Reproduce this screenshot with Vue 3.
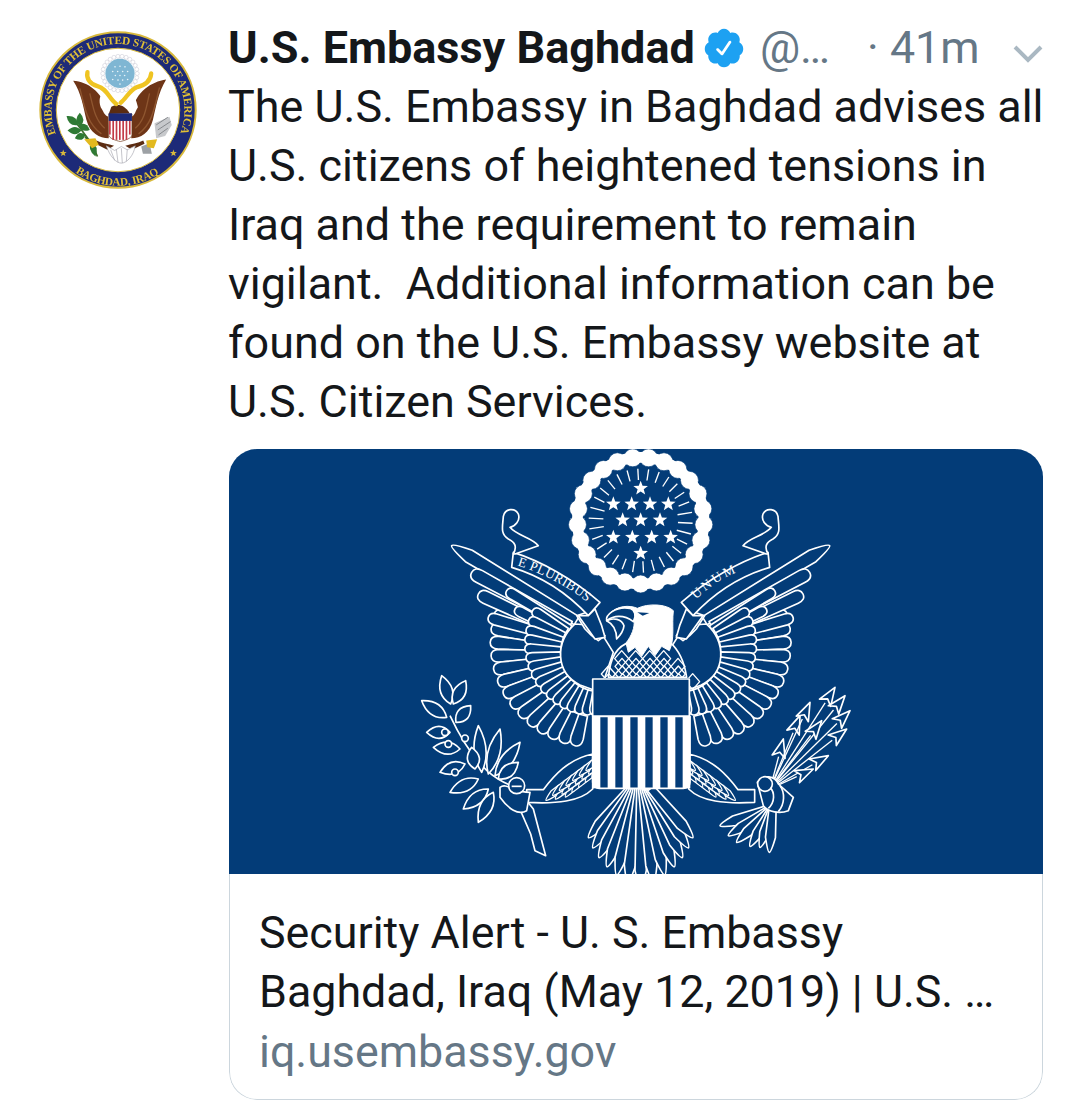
<script setup>
const CX = 722, CY = 245

function star(x, y, r) {
  let p = []
  for (let i = 0; i < 10; i++) {
    const a = -Math.PI / 2 + (i * Math.PI) / 5
    const q = i % 2 ? r * 0.42 : r
    p.push((x + q * Math.cos(a)).toFixed(1) + ' ' + (y + q * Math.sin(a)).toFixed(1))
  }
  return 'M' + p.join('L') + 'Z'
}
function feather(tx, ty, bx, by, w, pointed = false) {
  const dx = tx - bx, dy = ty - by, l = Math.hypot(dx, dy)
  const ux = dx / l, uy = dy / l, nx = -uy, ny = ux
  const mx = tx - ux * w * (pointed ? 3 : 1.3), my = ty - uy * w * (pointed ? 3 : 1.3)
  const k = pointed ? 0.35 : 1
  const f = (v) => v.toFixed(1)
  return `M${f(bx + nx * w * 0.7)} ${f(by + ny * w * 0.7)}L${f(mx + nx * w)} ${f(my + ny * w)}Q${f(tx + nx * w * k)} ${f(ty + ny * w * k)} ${f(tx)} ${f(ty)}Q${f(tx - nx * w * k)} ${f(ty - ny * w * k)} ${f(mx - nx * w)} ${f(my - ny * w)}L${f(bx - nx * w * 0.7)} ${f(by - ny * w * 0.7)}Z`
}
function leaf(tx, ty, bx, by, w) {
  const dx = tx - bx, dy = ty - by, l = Math.hypot(dx, dy)
  const nx = -dy / l, ny = dx / l
  const m1x = bx + dx * 0.45 + nx * w, m1y = by + dy * 0.45 + ny * w
  const m2x = bx + dx * 0.45 - nx * w, m2y = by + dy * 0.45 - ny * w
  return `M${bx} ${by}Q${m1x.toFixed(1)} ${m1y.toFixed(1)} ${tx} ${ty}Q${m2x.toFixed(1)} ${m2y.toFixed(1)} ${bx} ${by}Z`
}

const beads = Array.from({ length: 25 }, (_, i) => {
  const a = (i / 25) * Math.PI * 2 - Math.PI / 2 + Math.PI / 25
  return { x: CX + 190 * Math.cos(a), y: CY + 190 * Math.sin(a) }
})
const rays = Array.from({ length: 30 }, (_, i) => {
  const a = (i / 30) * Math.PI * 2 + 0.05
  const side = Math.abs(Math.sin(a)) < 0.3
  const r0 = side ? 112 : 122
  return { x1: CX + r0 * Math.cos(a), y1: CY + r0 * Math.sin(a), x2: CX + 156 * Math.cos(a), y2: CY + 156 * Math.sin(a) }
})
const stars = [
  [722, 148], [640, 195], [695, 195], [750, 195], [805, 195], [668, 243], [722, 243], [780, 243],
  [640, 295], [697, 295], [755, 295], [812, 295], [722, 343]
].map(([x, y]) => star(x, y, 23))

const WC = { x: 600, y: 640 }
const rad = (d) => (d * Math.PI) / 180
const outer = Array.from({ length: 14 }, (_, i) => {
  const t = i / 13
  const a = rad(200 - t * 95)
  const r = 338 - t * 48
  return feather(WC.x + r * Math.cos(a), WC.y + r * Math.sin(a), WC.x + 195 * Math.cos(a), WC.y + 195 * Math.sin(a), 19)
})
const middle = Array.from({ length: 18 }, (_, i) => {
  const t = i / 17
  const a = rad(212 - t * 124)
  const r = 238 - t * 52
  return feather(WC.x + r * Math.cos(a), WC.y + r * Math.sin(a), WC.x + 118 * Math.cos(a), WC.y + 118 * Math.sin(a), 15)
})
const longF = [
  feather(155, 320, 530, 545, 20, true),
  feather(215, 400, 510, 560, 20),
  feather(235, 465, 500, 590, 19),
  feather(265, 535, 490, 600, 17),
  feather(320, 455, 510, 570, 16),
  feather(345, 510, 500, 590, 15)
]
const legRows = []
for (let i = 0; i < 7; i++) {
  const x = 450 + i * 20, y = 1050 - i * 15
  legRows.push(feather(x - 12, y + 34, x + 30, y - 6, 10, true))
  legRows.push(feather(x + 16, y + 30, x + 60, y - 18, 10, true))
  legRows.push(feather(x + 46, y + 24, x + 84, y - 26, 10, true))
}
const tail = Array.from({ length: 13 }, (_, i) => {
  const t = i / 12
  const a = rad(136 - t * 92)
  const r = 300 - Math.abs(t - 0.5) * 165
  return feather(722 + r * Math.cos(a), 1045 + r * Math.sin(a), 722 + 60 * (t - 0.5), 1048, 17, true)
})
const scales = []
for (let row = 0; row < 4; row++) {
  const y = 635 + row * 23
  const half = 80 + row * 20
  for (let x = 745 - half; x <= 745 + half; x += 42) {
    const xx = x + (row % 2 ? 21 : 0)
    scales.push(`M${xx} ${y}L${xx + 21} ${y + 24}L${xx} ${y + 48}L${xx - 21} ${y + 24}Z`)
  }
}
const leaves = [
  [125, 710, 152, 795], [197, 725, 160, 795], [65, 785, 140, 835], [212, 800, 168, 850],
  [80, 880, 150, 880], [100, 925, 180, 930], [120, 1000, 195, 975], [150, 1060, 235, 1020],
  [190, 1110, 265, 1050], [235, 1150, 280, 1060], [235, 860, 245, 1000], [300, 870, 265, 1005],
  [360, 910, 285, 1010], [355, 970, 295, 1020], [215, 925, 225, 990]
].map(([a, b, c, d]) => leaf(a, b, c, d, 36))
const berries = [[135, 880], [145, 915], [195, 898], [165, 1000]]
const arrows = [
  [1150, 900], [1200, 830], [1230, 790], [1305, 745], [1335, 770], [1350, 815], [1340, 870], [1285, 950], [1240, 990], [1265, 845]
].map(([x, y]) => {
  const sx = 1110, sy = 1050
  const dx = x - sx, dy = y - sy, l = Math.hypot(dx, dy)
  const ux = dx / l, uy = dy / l, nx = -uy, ny = ux
  const bx = x - ux * 55, by = y - uy * 55
  return {
    line: `M${sx} ${sy}L${bx.toFixed(1)} ${by.toFixed(1)}`,
    head: `M${x} ${y}L${(bx + nx * 20).toFixed(1)} ${(by + ny * 20).toFixed(1)}L${(bx + ux * 14).toFixed(1)} ${(by + uy * 14).toFixed(1)}L${(bx - nx * 20).toFixed(1)} ${(by - ny * 20).toFixed(1)}Z`
  }
})
const fletch = [[960, 1160], [985, 1190], [1010, 1210], [1050, 1222], [1080, 1225], [1108, 1240]].map(([x, y]) =>
  feather(x, y, 1118, 1105, 15, true)
)
const stripes = Array.from({ length: 7 }, (_, i) => 578 + i * 45)
const miniStripes = Array.from({ length: 7 }, (_, i) => 263 + i * 10)
const miniDots = [
  [275, 172], [290, 170], [305, 172], [268, 186], [283, 186], [298, 186], [313, 186],
  [276, 198], [290, 198], [304, 198], [268, 210], [284, 212], [298, 212], [313, 210], [290, 224]
]
const miniBack = Array.from({ length: 26 }, (_, i) => {
  const a = (i / 26) * Math.PI * 2
  return { x: 296 + 52 * Math.cos(a), y: 190 + 52 * Math.sin(a) }
})
</script>

<template>
  <main class="tweet">
    <aside class="avatar-col">
      <svg class="avatar" viewBox="40 50 500 500" role="img" aria-label="Embassy seal">
        <circle cx="290" cy="300" r="234" fill="#1d2a78" stroke="#d8b93c" stroke-width="6" />
        <circle cx="290" cy="300" r="186" fill="#fff" stroke="#d8b93c" stroke-width="3" />
        <defs>
          <path id="sealTop" d="M103 372A200 200 0 1 1 477 372" />
          <path id="sealBottom" d="M158 486A228 228 0 0 0 422 486" />
        </defs>
        <text class="seal-text"><textPath href="#sealTop" textLength="770" lengthAdjust="spacing">EMBASSY OF THE UNITED STATES OF AMERICA</textPath></text>
        <text class="seal-text"><textPath href="#sealBottom" startOffset="4" textLength="268" lengthAdjust="spacing">BAGHDAD, IRAQ</textPath></text>
        <path :d="star(125, 430, 11)" fill="#d8b93c" />
        <path :d="star(457, 430, 11)" fill="#d8b93c" />

        <circle v-for="(b, i) in miniBack" :key="'mb' + i" :cx="b.x" :cy="b.y" r="6" fill="#fff" stroke="#aab" stroke-width="1" />
        <circle cx="296" cy="190" r="44" fill="#7fb6d3" />
        <circle v-for="(d, i) in miniDots" :key="'md' + i" :cx="d[0] + 6" :cy="d[1] - 2" r="2.4" fill="#e8f3f8" />

        <path d="M155 212C200 215 240 245 258 300C262 330 262 350 262 385C235 385 205 370 195 330C185 290 180 250 155 212Z" fill="#6e3517" />
        <path d="M435 208C390 215 345 245 333 300C330 330 330 350 330 385C358 385 385 370 395 330C405 290 410 250 435 208Z" fill="#6e3517" />
        <path d="M175 235C190 290 195 340 240 372M205 250C215 290 220 330 250 355M415 232C400 290 395 340 352 372M385 250C375 290 372 330 342 355" fill="none" stroke="#8f5630" stroke-width="4" />
        <path d="M238 292C226 255 248 225 280 285L297 296C330 250 340 245 350 292C344 300 340 320 330 320L262 320C250 320 244 300 238 292Z" fill="#fff" />
        <path d="M270 290C290 280 310 285 325 310L262 312Z" fill="#5b2c12" />
        <path d="M198 186C194 205 205 222 228 228C258 236 262 265 285 282M390 190C388 212 372 226 345 232C325 240 315 265 298 278" fill="none" stroke="#efc422" stroke-width="13" stroke-linecap="round" />
        <path d="M225 392C240 400 262 402 278 408L258 420L222 402ZM366 392C350 400 330 402 312 408L332 420L370 402Z" fill="#5b2c12" />
        <path d="M262 312H332V375C332 385 310 392 297 395C283 392 262 385 262 375Z" fill="#fff" stroke="#6e3517" stroke-width="2" />
        <rect v-for="(x, i) in miniStripes" :key="'ms' + i" :x="x" y="332" width="5" :height="i === 0 || i === 6 ? 42 : 58" fill="#c23a46" />
        <path d="M262 310H332V333H262Z" fill="#1d2a78" />
        <path d="M255 408C265 440 285 460 300 460C318 460 338 435 342 408L318 420L300 410L280 422Z" fill="#fff" stroke="#a7a7b0" stroke-width="2" />
        <path d="M268 420L280 452M285 418L290 458M300 415L303 460M318 418L315 455" stroke="#a7a7b0" stroke-width="2" fill="none" />
        <path d="M228 440L208 392L190 382M165 340L210 400" stroke="#3d6e2c" stroke-width="5" fill="none" />
        <path :d="leaf(135, 318, 170, 345, 22)" fill="#2f7a34" />
        <path :d="leaf(175, 308, 175, 350, 22)" fill="#2f7a34" />
        <path :d="leaf(138, 362, 180, 362, 22)" fill="#2f7a34" />
        <path :d="leaf(205, 360, 172, 345, 20)" fill="#2f7a34" />
        <path :d="leaf(160, 385, 192, 375, 20)" fill="#2f7a34" />
        <path :d="leaf(222, 440, 210, 395, 20)" fill="#2f7a34" />
        <path d="M188 388L222 385L232 405L212 415Z" fill="#e2b91f" />
        <path d="M400 340L445 320L452 345L432 378L405 385Z" fill="#c7c9cc" />
        <path d="M405 345L440 322M410 360L448 335M412 375L440 355" stroke="#86898d" stroke-width="3" />
        <path d="M360 410L385 400L392 432L365 432Z" fill="#9da1a5" />
        <path d="M375 392L408 388L398 415L378 412Z" fill="#e2b91f" />
      </svg>
    </aside>

    <section class="body">
      <header class="head">
        <strong class="name">U.S. Embassy Baghdad</strong>
        <svg class="badge" viewBox="0 0 24 24"><path fill="#1da1f2" d="M22.5 12.5c0-1.58-.875-2.95-2.148-3.6.154-.435.238-.905.238-1.4 0-2.21-1.71-3.998-3.818-3.998-.47 0-.92.084-1.336.25C14.818 2.415 13.51 1.5 12 1.5s-2.816.917-3.437 2.25c-.415-.165-.866-.25-1.336-.25-2.11 0-3.818 1.79-3.818 4 0 .494.083.964.237 1.4-1.272.65-2.147 2.018-2.147 3.6 0 1.495.782 2.798 1.942 3.486-.02.17-.032.34-.032.514 0 2.21 1.708 4 3.818 4 .47 0 .92-.086 1.335-.25.62 1.334 1.926 2.25 3.437 2.25 1.512 0 2.818-.916 3.437-2.25.415.163.865.248 1.336.248 2.11 0 3.818-1.79 3.818-4 0-.174-.012-.344-.033-.513 1.158-.687 1.943-1.99 1.943-3.484zm-6.616-3.334l-4.334 6.5c-.145.217-.382.334-.625.334-.143 0-.288-.04-.416-.126l-.115-.094-2.415-2.415c-.293-.293-.293-.768 0-1.06s.768-.294 1.06 0l1.77 1.767 3.825-5.74c.23-.345.696-.436 1.04-.207.346.23.44.696.21 1.04z" /></svg>
        <span class="handle">@…</span>
        <span class="time">· 41m</span>
        <svg class="chevron" viewBox="0 0 30 20"><path d="M2 4L15 17L28 4" fill="none" stroke="#aab8c2" stroke-width="4" /></svg>
      </header>

      <p class="text">The U.S. Embassy in Baghdad advises all<br />U.S. citizens of heightened tensions in<br />Iraq and the requirement to remain<br />vigilant.&nbsp; Additional information can be<br />found on the U.S. Embassy website at<br />U.S. Citizen Services.</p>

      <article class="card">
        <svg class="card-img" viewBox="-513 30 2442 1275" role="img" aria-label="Great Seal">
          <rect x="-513" y="30" width="2442" height="1275" fill="#033c78" />
          <g fill="#033c78" stroke="#fff" stroke-width="5" stroke-linejoin="round">
            <!-- glory -->
            <circle v-for="(b, i) in beads" :key="'b' + i" :cx="b.x" :cy="b.y" r="27" fill="#fff" stroke="#033c78" stroke-width="2" />
            <circle :cx="CX" :cy="CY" r="190" fill="none" stroke="#fff" stroke-width="32" />
            <line v-for="(r, i) in rays" :key="'r' + i" :x1="r.x1" :y1="r.y1" :x2="r.x2" :y2="r.y2" stroke-width="4" />
            <path v-for="(s, i) in stars" :key="'s' + i" :d="s" fill="#fff" stroke="none" />

            <!-- tail -->
            <path v-for="(f, i) in tail" :key="'t' + i" :d="f" />

            <!-- wings, left drawn and mirrored -->
            <g v-for="side in ['l', 'r']" :key="side" :transform="side === 'r' ? 'translate(1444 0) scale(-1 1)' : ''">
              <path v-for="(f, i) in outer" :key="'o' + i" :d="f" />
              <path v-for="(f, i) in longF" :key="'lf' + i" :d="f" />
              <path v-for="(f, i) in middle" :key="'m' + i" :d="f" />
              <path d="M525 555C465 610 465 700 540 738L600 760L640 640L590 560Z" />
              <path d="M530 530L560 520L615 590L595 605L575 590L555 570Z" />
              <path d="M380 1052H430C462 1010 505 960 578 945V1050C540 1088 470 1095 380 1090Z" />
              <path v-for="(f, i) in legRows" :key="'lg' + i" :d="f" stroke-width="4" />
            </g>

            <!-- neck and head -->
            <path d="M625 715C630 660 650 620 690 610H810C845 640 855 680 860 715Z" />
            <path v-for="(s, i) in scales" :key="'sc' + i" :d="s" stroke-width="4" fill="none" />
            <rect x="610" y="717" width="260" height="40" stroke="none" />
            <path d="M625 528C650 498 690 498 712 508C745 492 800 495 820 515C815 560 825 600 808 635L785 622L765 650L745 622L725 652L705 625L685 640L678 612C695 590 705 565 702 545C690 525 655 518 625 528Z" fill="#fff" stroke-width="3" />
            <path d="M620 545C615 530 645 500 690 508C705 514 710 530 700 548C670 525 640 530 620 545Z" />
            <path d="M712 520L748 522L728 530Z" stroke="none" />
            <path d="M620 545C640 535 665 540 672 560C670 580 660 590 650 600C650 575 640 555 620 545Z" />

            <!-- ribbons -->
            <path d="M340 340C420 365 520 420 600 490L565 530C500 460 420 410 335 385Z" />
            <path d="M1104 340C1024 365 924 420 844 490L879 530C944 460 1024 410 1109 385Z" />
            <path d="M345 345L415 320C395 295 350 290 330 265C345 262 362 245 355 225C345 205 315 208 310 232C308 262 300 285 325 300C345 310 352 322 340 345Z" />
            <path d="M1099 345L1029 320C1049 295 1094 290 1114 265C1099 262 1082 245 1089 225C1099 205 1129 208 1134 232C1136 262 1144 285 1119 300C1099 310 1092 322 1104 345Z" />
            <path d="M565 530L535 530L585 600L615 595L605 560L585 510Z" />
            <path d="M879 530L909 530L859 600L829 595L839 560L859 510Z" />
            <defs>
              <path id="rbL" d="M352 380C430 402 515 448 590 512" />
              <path id="rbR" d="M888 482C930 440 975 412 1032 392" />
            </defs>
            <text class="motto"><textPath href="#rbL">E PLURIBUS</textPath></text>
            <text class="motto wide"><textPath href="#rbR">UNUM</textPath></text>

            <!-- shield -->
            <rect x="578" y="720" width="290" height="112" stroke-width="5" />
            <path d="M578 832H870V1030C870 1042 860 1048 850 1048H598C588 1048 578 1042 578 1030Z" />
            <rect v-for="x in stripes" :key="x" :x="x" y="832" width="23" height="216" fill="#fff" stroke="none" />

            <!-- olive -->
            <path d="M360 1050C300 1030 230 1000 150 830" fill="none" />
            <path v-for="(l, i) in leaves" :key="'lv' + i" :d="l" />
            <circle v-for="(b, i) in berries" :key="'be' + i" :cx="b[0]" :cy="b[1]" r="10" />
            <path d="M372 1075L400 1110L437 1250L405 1235L392 1185L355 1100Z" />
            <path d="M300 1045C320 1030 340 1060 390 1060L380 1115C355 1130 325 1110 300 1075Z" />
            <circle cx="350" cy="1040" r="24" />
            <path d="M335 1042H365" />

            <!-- arrows -->
            <template v-for="(a, i) in arrows" :key="'a' + i">
              <path :d="a.line" fill="none" stroke-width="4" />
              <path :d="a.head" />
            </template>
            <path v-for="(f, i) in fletch" :key="'fl' + i" :d="f" />
            <path d="M1072 1030C1090 1005 1125 1010 1135 1035L1180 1075L1165 1115C1140 1125 1105 1120 1090 1100Z" />
            <path d="M1110 1045C1125 1060 1125 1090 1105 1108M1140 1040C1155 1060 1155 1095 1135 1118" fill="none" />
            <circle cx="1095" cy="1035" r="22" />
          </g>
        </svg>
        <div class="meta">
          <div class="title">Security Alert - U. S. Embassy<br />Baghdad, Iraq (May 12, 2019) | U.S. …</div>
          <div class="url">iq.usembassy.gov</div>
        </div>
      </article>
    </section>
  </main>
</template>

<style scoped>
.tweet {
  display: flex;
  width: 1080px;
  height: 1100px;
  overflow: hidden;
  background: #fff;
  font-family: Roboto, "Liberation Sans", sans-serif;
  color: #14171a;
}
.avatar-col {
  width: 229px;
  flex: none;
  padding: 27px 0 0 35px;
  box-sizing: border-box;
}
.avatar {
  display: block;
  width: 166px;
  height: 166px;
  filter: blur(0.35px);
}
.seal-text {
  font-family: "Liberation Serif", serif;
  font-weight: 700;
  font-size: 34px;
  fill: #e0bf35;
}
.body {
  width: 814px;
  flex: none;
  display: flex;
  flex-direction: column;
}
.head {
  display: flex;
  align-items: center;
  height: 48px;
  margin-top: 24px;
  font-size: 44.8px;
  line-height: 48px;
}
.name {
  font-weight: 700;
  font-size: 45px;
  margin-left: -1px;
}
.badge {
  width: 44px;
  height: 44px;
  margin-left: 7px;
  flex: none;
}
.handle {
  margin-left: 14px;
  color: #657786;
}
.time {
  margin-left: 37px;
  color: #657786;
}
.chevron {
  width: 30px;
  height: 20px;
  margin-left: auto;
  margin-top: 10px;
}
.text {
  margin: 5px 0 0 -1px;
  font-size: 44.9px;
  line-height: 59px;
  white-space: nowrap;
}
.card {
  margin-top: 18px;
  height: 651px;
  border-radius: 28px;
  overflow: hidden;
  display: flex;
  flex-direction: column;
}
.card-img {
  display: block;
  width: 814px;
  height: 425px;
  flex: none;
}
.motto {
  font-family: "Liberation Serif", serif;
  font-size: 40px;
  letter-spacing: 1px;
  fill: #fff;
  stroke: none;
}
.motto.wide {
  letter-spacing: 8px;
}
.meta {
  flex: 1;
  padding: 29px 29px 0;
  border: 1px solid #ccd6dd;
  border-top: 0;
  border-radius: 0 0 28px 28px;
}
.title {
  font-size: 44.8px;
  line-height: 59px;
  white-space: nowrap;
}
.url {
  font-size: 44.8px;
  line-height: 59px;
  color: #657786;
  margin-top: 1px;
}
</style>
